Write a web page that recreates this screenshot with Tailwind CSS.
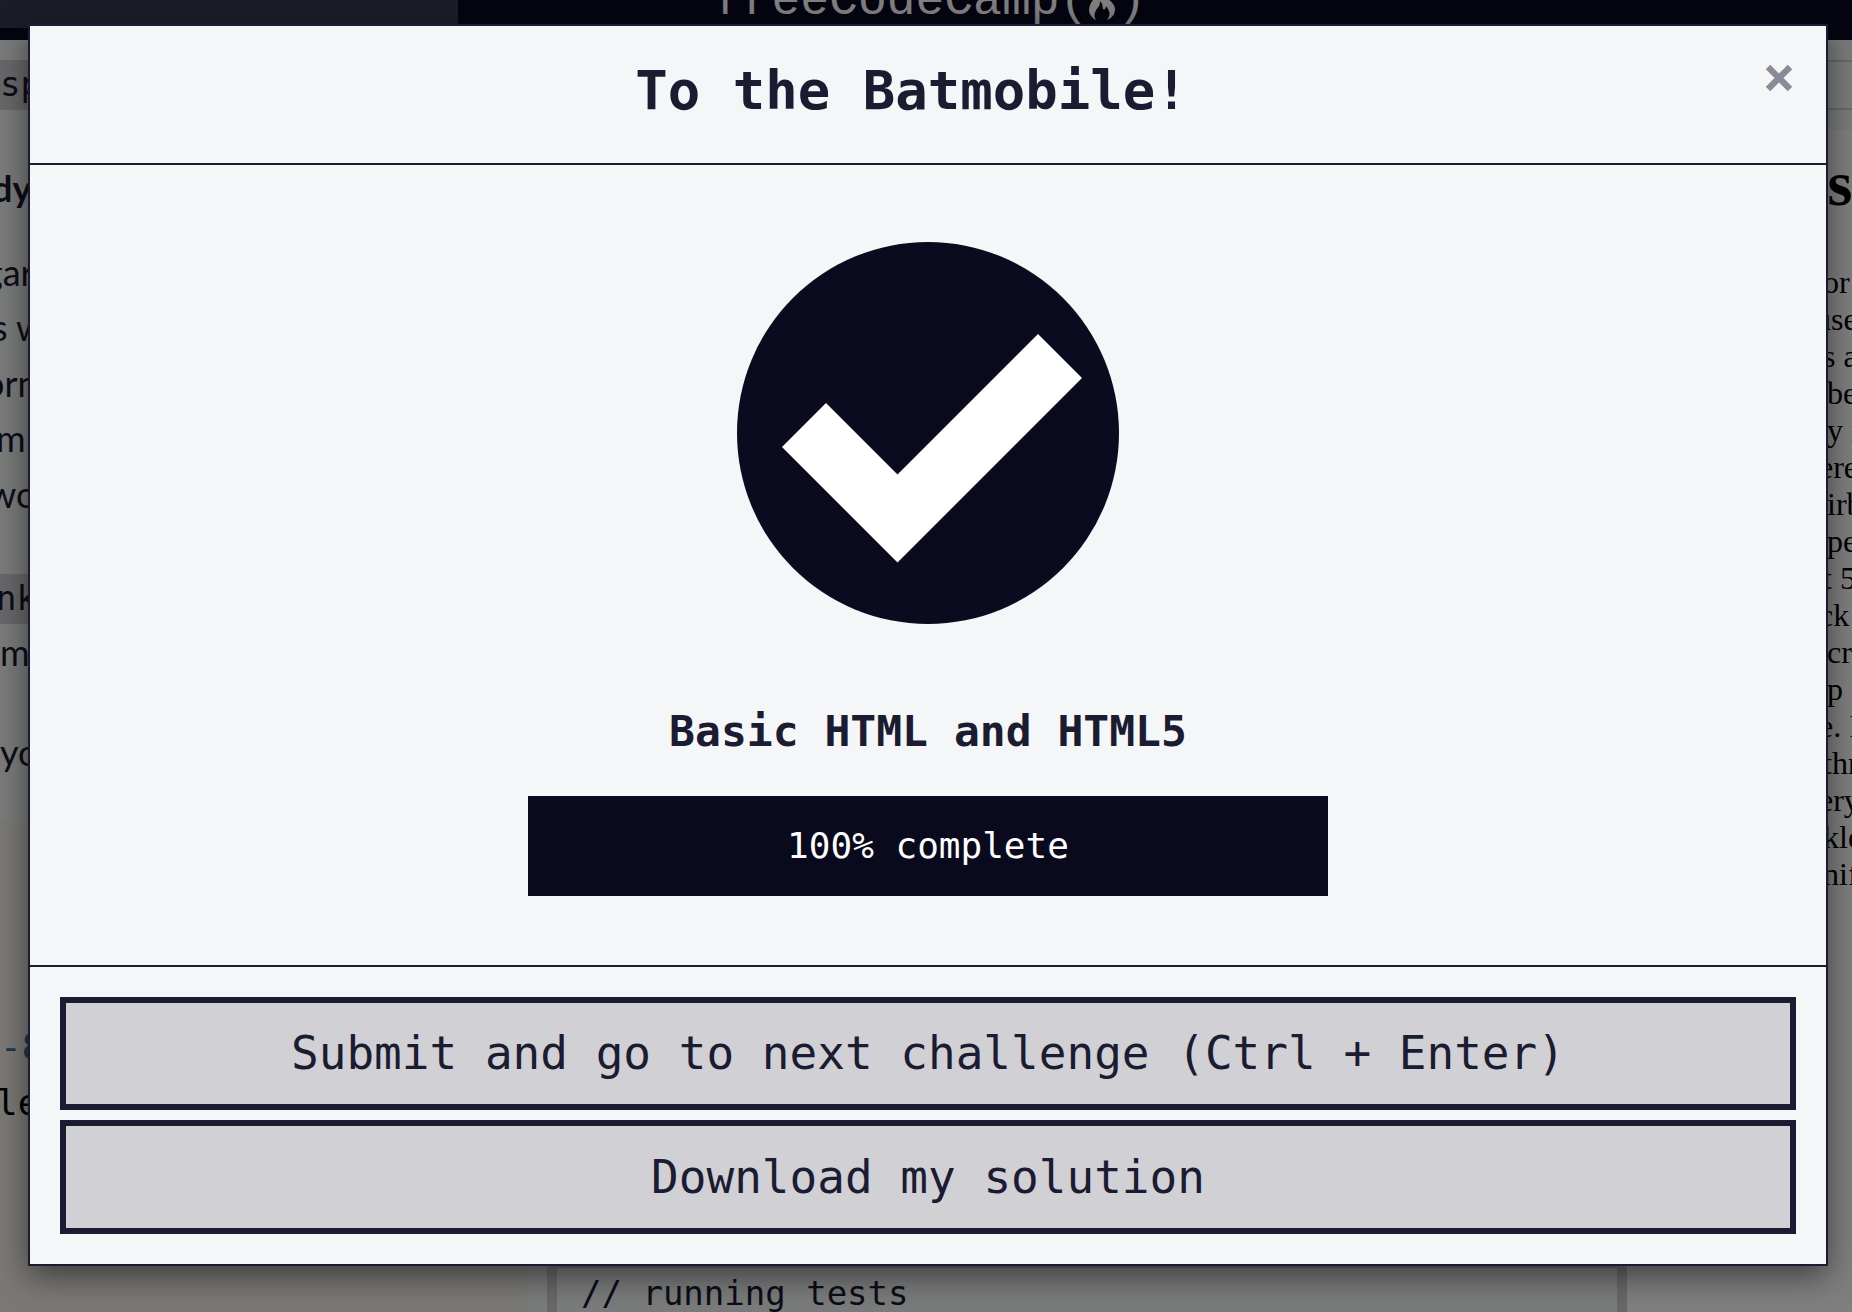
<!DOCTYPE html>
<html lang="en">
<head>
<meta charset="utf-8">
<meta name="viewport" content="width=device-width, initial-scale=1">
<title>Basic HTML and HTML5 | freeCodeCamp</title>
<script src="https://cdn.jsdelivr.net/npm/@tailwindcss/browser@4"></script>
</head>
<body class="relative h-screen overflow-hidden bg-white font-['DejaVu_Sans_Mono',monospace] text-[#1b1b32]">

<!-- Challenge page behind the dialog -->
<div class="flex h-full flex-col" aria-hidden="true">
  <header class="relative flex h-10 shrink-0 items-end justify-center bg-[#0a0a23] pb-3">
    <div class="absolute top-0 left-0 h-7 w-[458px] bg-[#3b3b4f]"></div>
    <div class="flex items-end pl-2 font-['Liberation_Mono',monospace] text-[48px] leading-[54px] whitespace-pre text-white">
      <span>freeCodeCamp(</span>
      <svg class="mb-[7px] h-[36px] w-[29px]" viewBox="0 0 29 34" fill="currentColor"><path d="M12 0C13 8 1 14 1 24c0 4 3 8 7 10-3-5-1-9 3-14 1-2 1-4 1-5 4 4 2 7 3 8 1 1 3 0 3-3 5 6 4 10 1 14 5-2 8-6 8-11C27 15 14 12 12 0Z"/></svg>
      <span>)</span>
    </div>
  </header>

  <div class="flex min-h-0 grow">
    <section class="flex w-[547px] shrink-0 flex-col overflow-hidden bg-[#f5f6f7] font-['Lato',sans-serif] text-[36px] leading-[56px]">
      <div class="flex h-[782px] shrink-0 flex-col items-start pt-5 whitespace-pre">
        <code class="h-[50px] bg-[#d0d0d5] pr-4 font-['DejaVu_Sans_Mono',monospace] text-[34px] leading-[48px]">spc</code>
        <strong class="-ml-2 mt-[50px]">dy</strong>
        <span class="-ml-4 mt-7">gar</span>
        <span class="-ml-2 leading-[55px]">s w</span>
        <span class="-ml-4 leading-[56px]">orn</span>
        <span class="-ml-1 leading-[55px]">m</span>
        <span class="-ml-3 leading-[56px]">wor</span>
        <code class="-ml-1 mt-[52px] h-[50px] bg-[#d0d0d5] pr-4 font-['DejaVu_Sans_Mono',monospace] text-[34px] leading-[48px]">nk</code>
        <span>m</span>
        <span class="mt-11">you</span>
      </div>
      <div class="mr-5 flex grow flex-col items-start bg-[#f6f2ed] pt-[197px] font-['DejaVu_Sans_Mono',monospace] whitespace-pre text-black">
        <span class="text-[#3a6f9f]">-8</span>
        <span class="-ml-1">le&gt;</span>
      </div>
    </section>

    <section class="flex grow flex-col justify-end bg-[#f5f6f7]">
      <pre class="h-[54px] border-x-[10px] border-t-[10px] border-[#d0d0d5] pl-6 font-['DejaVu_Sans_Mono',monospace] text-[34px] leading-[50px]">// running tests</pre>
    </section>

    <section class="flex w-[225px] shrink-0 flex-col overflow-hidden bg-[#f5f6f7]">
      <div class="flex h-[90px] shrink-0 items-center">
        <div class="h-[50px] w-full border-y-2 border-[#d0d0d5]"></div>
      </div>
      <div class="flex grow flex-col bg-white pl-[200px] font-['Liberation_Serif',serif] text-[32px] leading-[37px] whitespace-pre text-black">
        <h2 class="-ml-7 mt-[18px] text-[64px] leading-[72px] font-bold">es</h2>
        <span class="-ml-1 mt-11">or</span>
        <span class="-ml-3">use</span>
        <span class="-ml-1">s a</span>
        <span>be</span>
        <span>y r</span>
        <span class="-ml-2">ere</span>
        <span>irb</span>
        <span>pe</span>
        <span class="-ml-1">t 5</span>
        <span class="-ml-2">ck</span>
        <span>cr</span>
        <span>p</span>
        <span class="-ml-2">e. I</span>
        <span class="-ml-1">thr</span>
        <span class="-ml-2">ery</span>
        <span class="-ml-1">kle</span>
        <span class="-ml-1">nif</span>
      </div>
    </section>
  </div>
</div>

<!-- Backdrop and completion dialog -->
<div class="absolute inset-0 bg-black/50 pt-6 pr-6 pl-7">
  <div role="dialog" aria-modal="true" aria-labelledby="dialog-title" class="border-2 border-[#1b1b32] bg-[#f5f6f7] shadow-[0_10px_30px_rgba(0,0,0,0.5)]">
    <header class="flex items-start border-b-2 border-[#1b1b32] pt-[33px] pr-[33px] pb-10 pl-7">
      <h1 id="dialog-title" class="grow text-center text-[54px] leading-[64px] font-bold">To the Batmobile!</h1>
      <button type="button" aria-label="Close" class="mt-[5px] text-[#8b8a98]">
        <svg class="size-7" viewBox="0 0 28 28" fill="none" stroke="currentColor" stroke-width="6.2"><path d="M3 3l22 22M25 3L3 25"/></svg>
      </button>
    </header>

    <main class="flex flex-col items-center pt-[77px] pb-[69px]">
      <svg class="size-[382px]" viewBox="0 0 382 382" role="img" aria-label="Passed"><circle cx="191" cy="191" r="191" fill="#0b0b20"/><path fill="#fff" d="M45 205 89 161 160.500 232.500 301 92 345 136 160.500 320.500Z"/></svg>
      <h2 class="mt-[77px] text-[43px] leading-[60px] font-bold">Basic HTML and HTML5</h2>
      <div class="mt-[35px] w-[800px] max-w-full bg-[#0a0a1f] text-center text-[36px] leading-[100px] text-white">100% complete</div>
    </main>

    <footer class="flex flex-col gap-[10px] border-t-2 border-[#1b1b32] p-[30px] text-[46px]">
      <button type="button" class="h-[113px] border-[6px] border-[#1b1b32] bg-[#d0d0d5]">Submit and go to next challenge (Ctrl + Enter)</button>
      <button type="button" class="h-[114px] border-[6px] border-[#1b1b32] bg-[#d0d0d5]">Download my solution</button>
    </footer>
  </div>
</div>
</body>
</html>
